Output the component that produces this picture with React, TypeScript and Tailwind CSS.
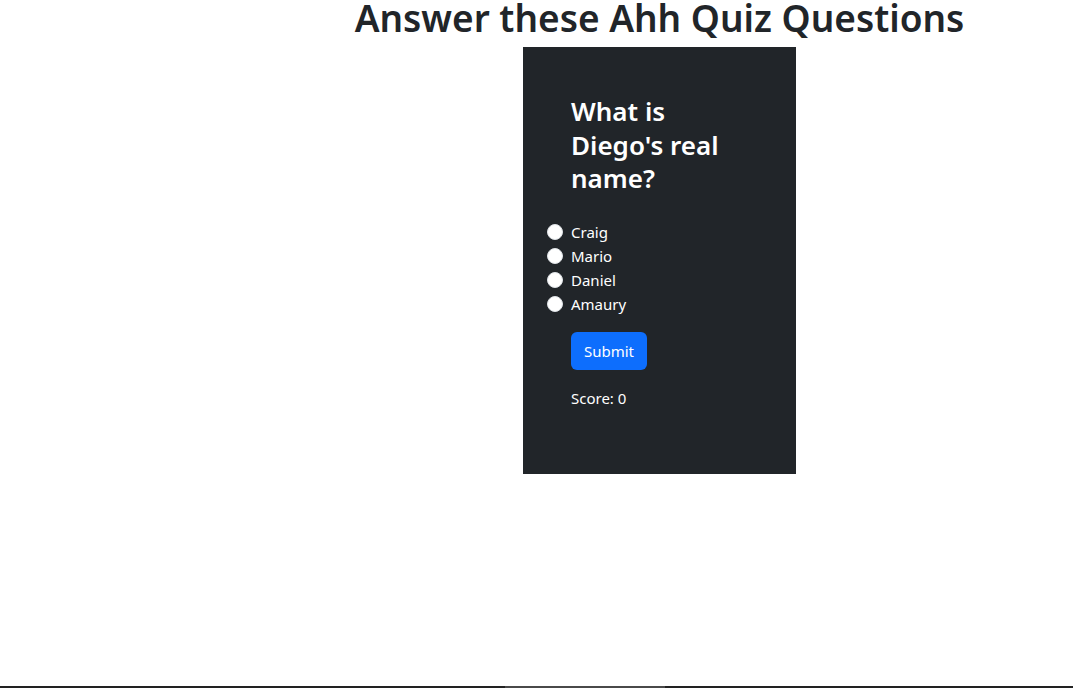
import React, { useState } from "react"

const options = ["Craig", "Mario", "Daniel", "Amaury"]

const App: React.FC = () => {
  const [picked, setPicked] = useState<string | null>(null)
  const [score] = useState(0)

  return (
    <div className="min-h-screen flex flex-col bg-white text-[#212529] font-['Noto_Sans',_'Open_Sans',_sans-serif]">
      <div className="flex-1 flex flex-col items-center pl-[246px]">
        <h1 className="h-[47px] text-[37px] leading-[36px] font-semibold whitespace-nowrap">Answer these Ahh Quiz Questions</h1>
        <div className="w-[273px] h-[427px] bg-[#212529] p-12 text-white">
          <h3 className="text-[26px] leading-[33.6px] font-semibold mb-6">What is Diego's real name?</h3>
          <div className="flex flex-col">
            {options.map((opt) => (
              <label key={opt} className="relative flex items-center h-6 text-[15px] cursor-pointer">
                <input
                  type="radio"
                  name="answer"
                  checked={picked === opt}
                  onChange={() => setPicked(opt)}
                  className="absolute -left-6 top-1 w-4 h-4 m-0 appearance-none rounded-full bg-white border border-[#dee2e6] checked:border-[5px] checked:border-[#0d6efd]"
                />
                <span>{opt}</span>
              </label>
            ))}
          </div>
          <button className="mt-4 w-[76px] h-[38px] rounded-md bg-[#0d6efd] text-white text-[15px]">Submit</button>
          <p className="mt-4 mb-4 leading-6 text-[15px]">Score: {score}</p>
        </div>
      </div>
      <div className="h-[2px] bg-[#222] flex">
        <div className="ml-[505px] w-[160px] h-full bg-[#4a4a4a]" />
      </div>
    </div>
  )
}

export default App
